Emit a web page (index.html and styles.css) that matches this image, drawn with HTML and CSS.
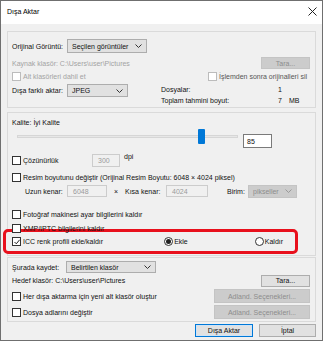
FILE: index.html
```html
<!DOCTYPE html>
<html lang="tr">
<head>
  <meta charset="UTF-8">
  <title>Dışa Aktar</title>
  <link rel="stylesheet" href="styles.css">
</head>
<body>
  <div class="window">
    <div class="titlebar">
      <span class="title">Dışa Aktar</span>
      <svg class="close" width="9" height="9" viewBox="0 0 9 9"><path d="M0.5 0.5 L8.5 8.5 M8.5 0.5 L0.5 8.5" stroke="#222" stroke-width="1"/></svg>
    </div>

    <div class="content">
      <!-- kaynak -->
      <div class="panel p1">
        <div class="row r-src">
          <span class="lbl lbl-w">Orijinal Görüntü:</span>
          <span class="select s-orig">Seçilen görüntüler<svg class="chev" width="7" height="4" viewBox="0 0 7 4"><path d="M0.5 0.5 L3.5 3.5 L6.5 0.5" fill="none" stroke="#333"/></svg></span>
        </div>
        <div class="row r-path">
          <span class="dim">Kaynak klasör: C:\Users\user\Pictures</span>
          <span class="btn off b-tara push">Tara...</span>
        </div>
        <div class="row r-opts">
          <span class="chk off"></span><span class="dim">Alt klasörleri dahil et</span>
          <span class="chk off push"></span><span class="semi">İşlemden sonra orijinalleri sil</span>
        </div>
        <div class="row r-fmt">
          <div class="fmt">
            <span class="lbl lbl-w">Dışa farklı aktar:</span>
            <span class="select s-fmt">JPEG<svg class="chev" width="7" height="4" viewBox="0 0 7 4"><path d="M0.5 0.5 L3.5 3.5 L6.5 0.5" fill="none" stroke="#333"/></svg></span>
          </div>
          <div class="stats">
            <div class="stat"><span class="k">Dosyalar:</span><span class="v">1</span></div>
            <div class="stat"><span class="k">Toplam tahmini boyut:</span><span class="v">7</span><span class="u">MB</span></div>
          </div>
        </div>
      </div>

      <!-- kalite -->
      <div class="panel p2">
        <div class="row r-q">Kalite: İyi Kalite</div>
        <div class="row r-slider">
          <div class="slider"><span class="track"></span><span class="thumb"></span></div>
          <span class="field f-q">85</span>
        </div>
        <div class="row r-res">
          <span class="chk"></span><span class="res-lbl">Çözünürlük</span>
          <span class="field off f-dpi">300</span><span class="dpi">dpi</span>
        </div>
        <div class="row r-resize">
          <span class="chk"></span><span>Resim boyutunu değiştir (Orijinal Resim Boyutu: 6048 × 4024 piksel)</span>
        </div>
        <div class="row r-size">
          <span class="size-lbl">Uzun kenar:</span>
          <span class="field off f-size">6048</span>
          <span class="times">×</span>
          <span class="size-lbl2">Kısa kenar:</span>
          <span class="field off f-size f-size2">4024</span>
          <span class="unit-lbl">Birim:</span>
          <span class="select off s-unit">pikseller<svg class="chev" width="7" height="4" viewBox="0 0 7 4"><path d="M0.5 0.5 L3.5 3.5 L6.5 0.5" fill="none" stroke="#999"/></svg></span>
        </div>
        <div class="row r-cam">
          <span class="chk"></span><span>Fotoğraf makinesi ayar bilgilerini kaldır</span>
        </div>
        <div class="row r-xmp">
          <span class="chk"></span><span>XMP/IPTC bilgilerini kaldır</span>
        </div>
        <div class="row r-icc">
          <span class="chk on"><svg width="6" height="6" viewBox="0 0 6 6"><path d="M0.5 3 L2.3 4.8 L5.6 0.8" fill="none" stroke="#222" stroke-width="1"/></svg></span>
          <span>ICC renk profili ekle/kaldır</span>
          <span class="radio on r-ekle"></span><span>Ekle</span>
          <span class="radio r-kaldir"></span><span>Kaldır</span>
        </div>
      </div>

      <!-- hedef -->
      <div class="panel p3">
        <div class="row r-dest">
          <span class="lbl lbl-w2">Şurada kaydet:</span>
          <span class="select s-dest">Belirtilen klasör<svg class="chev" width="7" height="4" viewBox="0 0 7 4"><path d="M0.5 0.5 L3.5 3.5 L6.5 0.5" fill="none" stroke="#333"/></svg></span>
        </div>
        <div class="row r-target">
          <span>Hedef klasör: C:\Users\user\Pictures</span>
          <span class="btn b-tara push">Tara...</span>
        </div>
        <div class="row r-sub">
          <span class="chk"></span><span>Her dışa aktarma için yeni alt klasör oluştur</span>
          <span class="btn off b-adl push">Adland. Seçenekleri...</span>
        </div>
        <div class="row r-ren">
          <span class="chk"></span><span>Dosya adlarını değiştir</span>
          <span class="btn off b-adl push">Adland. Seçenekleri...</span>
        </div>
      </div>

      <div class="footer">
        <span class="btn default b-export">Dışa Aktar</span>
        <span class="btn b-cancel">İptal</span>
      </div>
    </div>
  </div>
</body>
</html>
```

FILE: styles.css
```css
body {
  margin: 0;
  font-family: 'Liberation Sans', Arial, sans-serif;
  font-size: 7px;
  color: #111;
  background: #fff;
}
.window {
  width: 323px;
  height: 341px;
  box-sizing: border-box;
  border: 1px solid #6f6f6f;
  background: #f0f0f0;
}
.titlebar {
  height: 21px;
  background: #fff;
  display: flex;
  align-items: center;
  padding: 0 5px 2px 6px;
}
.title {
  font-size: 7px;
  color: #000;
}
.close {
  margin-left: auto;
}
.content {
  padding: 7px 6px 0 6px;
}
.panel {
  border: 1px solid #dadada;
  padding: 0 5px 0 4px;
}
.row {
  display: flex;
  align-items: center;
  white-space: nowrap;
}
.push {
  margin-left: auto;
}
.dim {
  color: #a3a3a3;
}
.semi {
  color: #555;
}
.lbl-w {
  width: 55px;
}
.lbl-w2 {
  width: 54px;
}

/* controls */
.select {
  box-sizing: border-box;
  display: flex;
  align-items: center;
  padding: 0 4px 0 4px;
  background: #e1e1e1;
  border: 1px solid #adadad;
  height: 14px;
}
.select .chev {
  margin-left: auto;
}
.select.off {
  background: #cccccc;
  border-color: #c4c4c4;
  color: #8d8d8d;
}
.btn {
  box-sizing: border-box;
  display: flex;
  align-items: center;
  justify-content: center;
  background: #e1e1e1;
  border: 1px solid #adadad;
  height: 13px;
}
.btn.off {
  background: #cccccc;
  border-color: #c4c4c4;
  color: #8d8d8d;
}
.btn.default {
  border-color: #0078d7;
  box-shadow: inset 0 0 0 1px #cfe3f6;
}
.field {
  box-sizing: border-box;
  display: flex;
  align-items: center;
  padding-left: 3px;
  background: #fff;
  border: 1px solid #7a7a7a;
  height: 14px;
}
.field.off {
  background: #f0f0f0;
  border-color: #cccccc;
  color: #9a9a9a;
}
.chk {
  box-sizing: border-box;
  width: 9px;
  height: 9px;
  border: 1px solid #333;
  background: #fff;
  margin-right: 2px;
  flex: none;
  display: flex;
  align-items: center;
  justify-content: center;
}
.chk.off {
  border-color: #bcbcbc;
}
.radio {
  box-sizing: border-box;
  width: 9px;
  height: 9px;
  border: 1px solid #333;
  border-radius: 50%;
  background: #fff;
  margin-right: 1px;
  flex: none;
  display: flex;
  align-items: center;
  justify-content: center;
}
.radio.on::after {
  content: "";
  width: 5px;
  height: 5px;
  border-radius: 50%;
  background: #222;
}

/* panel 1 */
.p1 {
  padding-top: 7px;
  padding-bottom: 1px;
}
.r-src {
  height: 14px;
}
.s-orig {
  width: 80px;
}
.r-path {
  height: 14px;
  margin-top: 3px;
}
.b-tara {
  width: 49px;
  height: 12px;
}
.r-opts {
  height: 12px;
  padding-right: 3px;
}
.r-opts .push {
  margin-right: 2px;
}
.r-fmt {
  margin-top: 2px;
  align-items: flex-start;
}
.fmt {
  display: flex;
  align-items: center;
  width: 149px;
}
.s-fmt {
  width: 61px;
  height: 13px;
}
.stat {
  display: flex;
  align-items: center;
  height: 11px;
}
.stat .k {
  width: 117px;
}
.stat .v {
  width: 11px;
}

/* panel 2 */
.p2 {
  margin-top: 4px;
  padding-top: 3px;
}
.r-q {
  height: 12px;
}
.r-slider {
  height: 19px;
  margin-top: 1px;
  align-items: flex-start;
}
.slider {
  position: relative;
  width: 221px;
  height: 15px;
  margin-left: 5px;
  display: flex;
  align-items: center;
}
.track {
  display: block;
  width: 100%;
  height: 3px;
  box-sizing: border-box;
  background: #e7e7e7;
  border: 1px solid #d6d6d6;
}
.thumb {
  position: absolute;
  left: 181px;
  top: 0;
  width: 7px;
  height: 15px;
  border-radius: 1px;
  background: #0078d7;
}
.f-q {
  width: 29px;
  margin-top: 5px;
  margin-left: 5px;
}
.r-res {
  height: 13px;
  margin-top: 6px;
}
.res-lbl {
  width: 69px;
}
.f-dpi {
  width: 28px;
  height: 13px;
  padding-left: 5px;
}
.dpi {
  margin-left: 4px;
  align-self: flex-start;
  margin-top: -1px;
}
.r-resize {
  height: 12px;
  margin-top: 4px;
}
.r-size {
  height: 14px;
  margin-top: 1px;
}
.size-lbl {
  margin-left: 13px;
  width: 42px;
}
.f-size {
  width: 40px;
  height: 12px;
  padding-left: 5px;
}
.times {
  width: 18px;
  text-align: center;
}
.size-lbl2 {
  width: 41px;
}
.f-size2 {
  width: 42px;
}
.unit-lbl {
  margin-left: 19px;
  width: 21px;
}
.s-unit {
  width: 49px;
  height: 13px;
}
.r-cam {
  height: 12px;
  margin-top: 10px;
}
.r-xmp {
  height: 12px;
  margin-top: 2px;
}
.r-icc {
  height: 19px;
  margin: -5px 12px 1px -9px;
  padding-left: 6px;
  border: 3px solid #e8101c;
  border-radius: 5px;
  background: #f0f0f0;
}
.r-ekle {
  margin-left: 61px;
}
.r-kaldir {
  margin-left: 67px;
}

/* panel 3 */
.p3 {
  margin-top: 1px;
  padding-top: 3px;
  padding-bottom: 2px;
}
.r-dest {
  height: 12px;
}
.s-dest {
  width: 90px;
  height: 12px;
}
.r-target {
  height: 13px;
  margin-top: 1px;
}
.r-sub,
.r-ren {
  height: 14px;
  margin-top: 2px;
}
.b-adl {
  width: 96px;
  height: 14px;
}

.footer {
  display: flex;
  justify-content: flex-end;
  gap: 6px;
  margin-top: 2px;
}
.b-export {
  width: 58px;
}
.b-cancel {
  width: 57px;
}
```
